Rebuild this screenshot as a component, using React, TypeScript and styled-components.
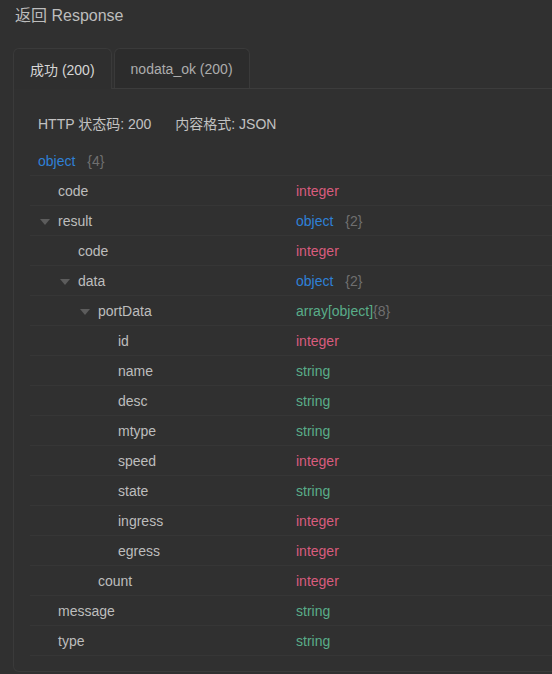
import styled, { createGlobalStyle } from 'styled-components';

const GlobalStyle = createGlobalStyle`
  html, body {
    margin: 0;
    padding: 0;
    background: #303030;
  }
  body {
    font-family: "Liberation Sans", Arial, "Noto Sans CJK SC", sans-serif;
    font-size: 14px;
    overflow: hidden;
  }
`

const Page = styled.div`
  width: 552px;
  height: 674px;
  overflow: hidden;
  padding-left: 13px;
  box-sizing: border-box;
`

const Title = styled.div`
  font-size: 16px;
  line-height: 32px;
  color: #bdbdbd;
  padding-left: 2px;
`

const TabBar = styled.div`
  display: flex;
  gap: 2px;
  margin-top: 16px;
  margin-right: -40px;
  border-bottom: 1px solid #3c3c3c;
  height: 40px;
`

const Tab = styled.div<{ $active?: boolean }>`
  box-sizing: border-box;
  padding: 0 16px;
  display: flex;
  align-items: center;
  border: 1px solid #3a3a3a;
  border-bottom: none;
  border-radius: 6px 6px 0 0;
  background: ${p => (p.$active ? '#2f2f2f' : '#2c2c2c')};
  color: ${p => (p.$active ? '#d6d6d6' : '#acacac')};
  margin-bottom: ${p => (p.$active ? '-1px' : '0')};
  height: ${p => (p.$active ? '41px' : '40px')};
`

const Panel = styled.div`
  margin-right: -40px;
  border: 1px solid #3a3a3a;
  border-top: none;
  border-radius: 0 0 6px 6px;
  padding: 24px 0 15px 16px;
`

const Info = styled.div`
  display: flex;
  gap: 24px;
  color: #c2c2c2;
  padding-left: 8px;
  line-height: 22px;
  margin-bottom: 11px;
`

const Tree = styled.div`
  display: flex;
  flex-direction: column;
`

const Row = styled.div`
  display: flex;
  align-items: center;
  height: 30px;
  border-bottom: 1px solid #363636;
  box-sizing: border-box;
`

const NameCell = styled.div<{ $depth: number }>`
  width: 266px;
  display: flex;
  align-items: center;
  padding-left: ${p => 8 + p.$depth * 20}px;
  box-sizing: border-box;
  color: #bdbdbd;
`

const Caret = styled.span`
  width: 0;
  height: 0;
  border-left: 5px solid transparent;
  border-right: 5px solid transparent;
  border-top: 6px solid #5c5c5c;
  margin-left: -18px;
  margin-right: 8px;
  margin-top: 2px;
`

const TypeCell = styled.div`
  display: flex;
  align-items: center;
`

const Type = styled.span<{ $kind: string }>`
  color: ${p =>
    p.$kind === 'object' ? '#2f80d6' : p.$kind === 'integer' ? '#d95c7d' : '#59ad89'};
`

const Count = styled.span<{ $gap?: boolean }>`
  color: #6f6f6f;
  margin-left: ${p => (p.$gap ? '12px' : '0')};
`

type Field = {
  name: string;
  depth: number;
  type: string;
  open?: boolean;
  count?: number;
  array?: boolean;
}

const fields: Field[] = [
  { name: 'code', depth: 1, type: 'integer' },
  { name: 'result', depth: 1, type: 'object', open: true, count: 2 },
  { name: 'code', depth: 2, type: 'integer' },
  { name: 'data', depth: 2, type: 'object', open: true, count: 2 },
  { name: 'portData', depth: 3, type: 'string', open: true, count: 8, array: true },
  { name: 'id', depth: 4, type: 'integer' },
  { name: 'name', depth: 4, type: 'string' },
  { name: 'desc', depth: 4, type: 'string' },
  { name: 'mtype', depth: 4, type: 'string' },
  { name: 'speed', depth: 4, type: 'integer' },
  { name: 'state', depth: 4, type: 'string' },
  { name: 'ingress', depth: 4, type: 'integer' },
  { name: 'egress', depth: 4, type: 'integer' },
  { name: 'count', depth: 3, type: 'integer' },
  { name: 'message', depth: 1, type: 'string' },
  { name: 'type', depth: 1, type: 'string' },
]

export default function App() {
  return (
    <Page>
      <GlobalStyle />
      <Title>返回 Response</Title>
      <TabBar>
        <Tab $active>成功 (200)</Tab>
        <Tab>nodata_ok (200)</Tab>
      </TabBar>
      <Panel>
        <Info>
          <span>HTTP 状态码: 200</span>
          <span>内容格式: JSON</span>
        </Info>
        <Tree>
          <Row>
            <NameCell $depth={0}>
              <Type $kind="object">object</Type>
              <Count $gap>{'{4}'}</Count>
            </NameCell>
          </Row>
          {fields.map((f, i) => (
            <Row key={i}>
              <NameCell $depth={f.depth}>
                {f.open && <Caret />}
                {f.name}
              </NameCell>
              <TypeCell>
                {f.array ? (
                  <>
                    <Type $kind="string">array[object]</Type>
                    <Count>{`{${f.count}}`}</Count>
                  </>
                ) : (
                  <>
                    <Type $kind={f.type}>{f.type}</Type>
                    {f.count !== undefined && <Count $gap>{`{${f.count}}`}</Count>}
                  </>
                )}
              </TypeCell>
            </Row>
          ))}
        </Tree>
      </Panel>
    </Page>
  )
}
